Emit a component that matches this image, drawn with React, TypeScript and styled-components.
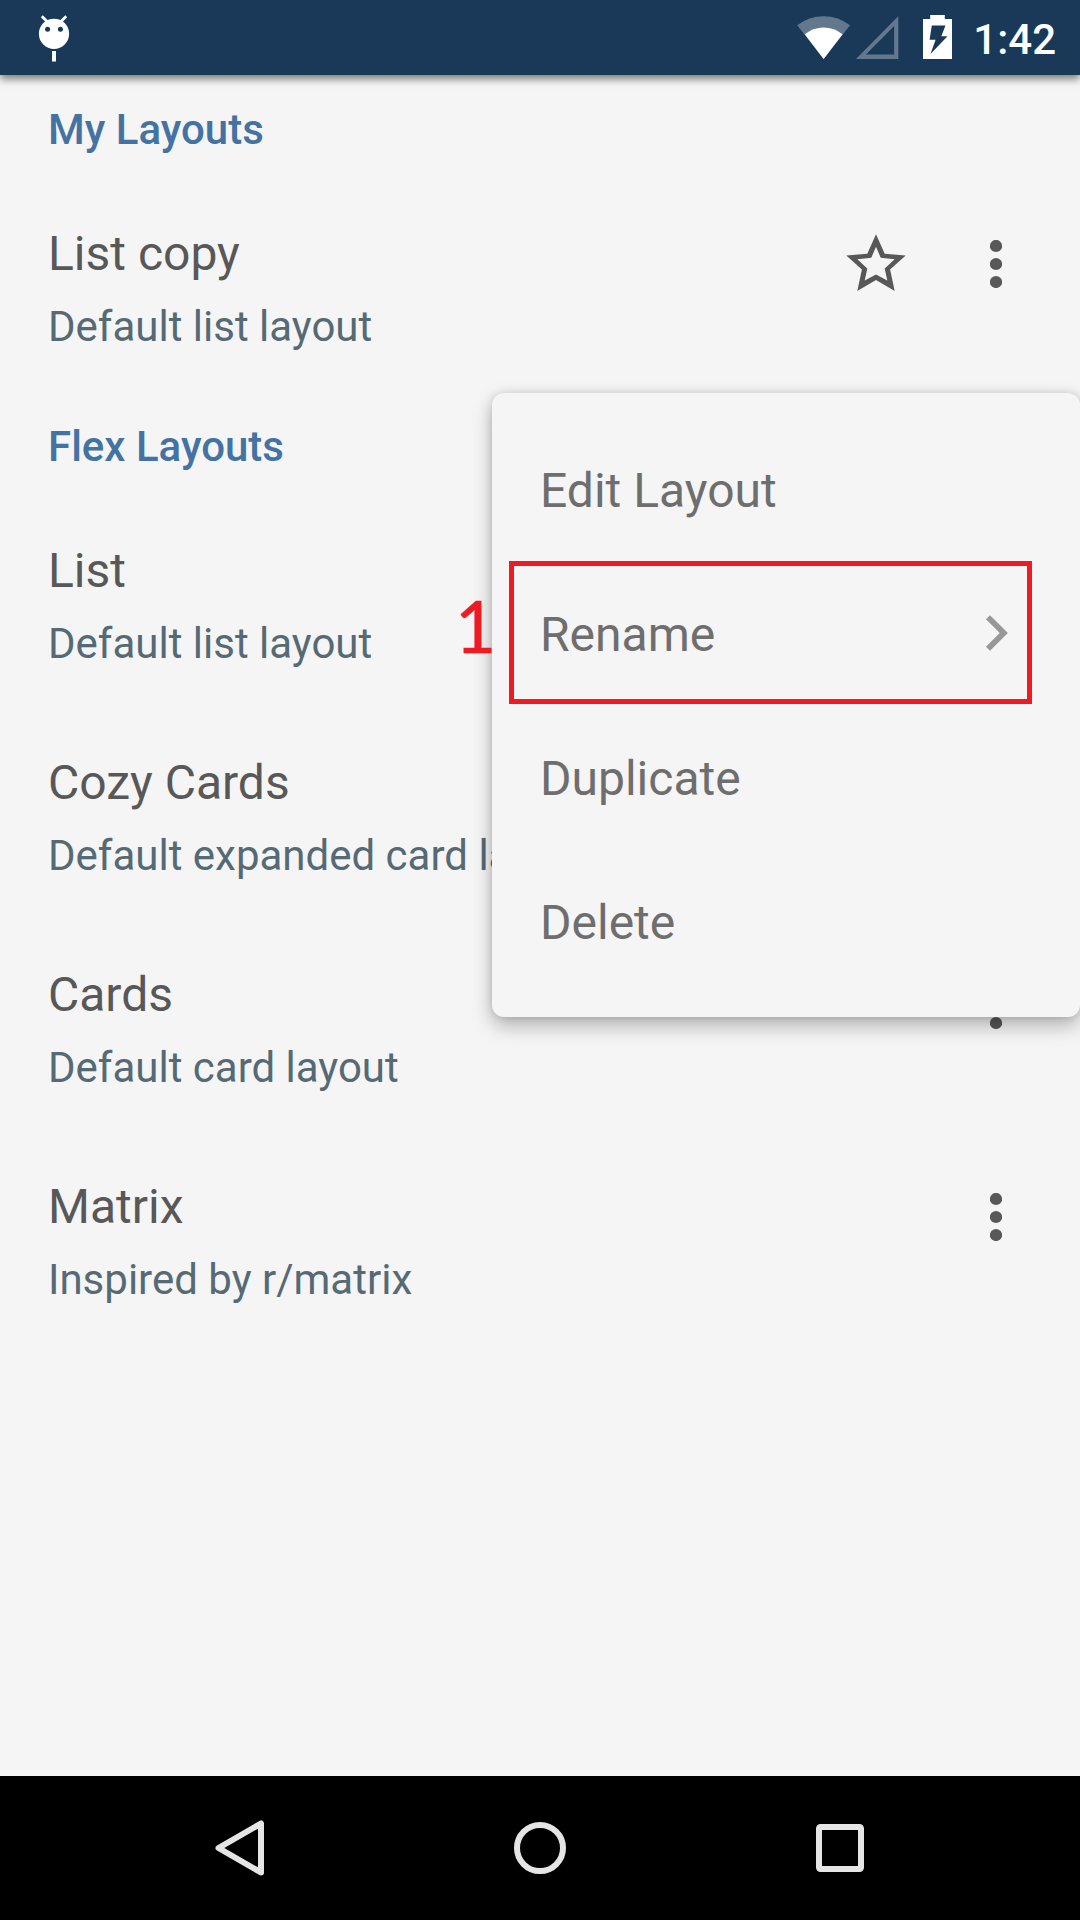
import React from "react";
import styled, { createGlobalStyle } from "styled-components";

const color = {
  bar: "#1a3958",
  surface: "#f5f5f5",
  section: "#4473a3",
  title: "#585858",
  caption: "#566a76",
  menuText: "#6e6e6e",
  chevron: "#989898",
  mark: "#ed1c24",
  nav: "#e5e5e5",
};

const GlobalStyle = createGlobalStyle`
  *, *::before, *::after { box-sizing: border-box; }
  body {
    margin: 0;
    background: ${color.surface};
    font-family: Roboto, "Noto Sans", sans-serif;
  }
`;

const Screen = styled.div`
  position: relative;
  display: flex;
  flex-direction: column;
  width: 1080px;
  height: 1920px;
  overflow: hidden;
  background: ${color.surface};
`;

const StatusBar = styled.header`
  flex: none;
  display: flex;
  align-items: flex-start;
  justify-content: space-between;
  height: 75px;
  padding: 0 24px 0 36px;
  background: ${color.bar};
  box-shadow: 0 4px 8px rgba(0, 0, 0, 0.5);
  color: #fff;
`;

const StatusIcons = styled.div`
  display: flex;
  align-items: flex-start;
  height: 75px;
`;

const Glyph = styled.svg`
  display: block;
  flex: none;
`;

const Clock = styled.time`
  margin-left: 20px;
  font-size: 42px;
  font-weight: 500;
  line-height: 79px;
`;

const Content = styled.main`
  flex: 1;
`;

const SectionTitle = styled.h2`
  height: 105px;
  margin: 0;
  padding: 25px 48px 0;
  color: ${color.section};
  font-size: 42px;
  font-weight: 500;
  line-height: 60px;
`;

const LayoutRow = styled.div`
  display: flex;
  justify-content: space-between;
  height: 212px;
  padding: 0 24px 0 48px;
`;

const RowText = styled.div`
  display: flex;
  flex-direction: column;
  gap: 13px;
  padding-top: 44px;
  white-space: nowrap;
`;

const RowTitle = styled.div`
  color: ${color.title};
  font-size: 48px;
  line-height: 60px;
`;

const RowCaption = styled.div`
  color: ${color.caption};
  font-size: 42px;
  line-height: 60px;
`;

const RowActions = styled.div`
  display: flex;
  height: 168px;
  align-items: center;
`;

const IconButton = styled.button`
  display: flex;
  align-items: center;
  justify-content: center;
  width: 120px;
  height: 120px;
  padding: 0;
  border: 0;
  background: none;
  color: ${color.title};
`;

const PopupMenu = styled.div`
  position: absolute;
  top: 393px;
  right: 0;
  width: 588px;
  height: 624px;
  padding: 24px 0;
  border-radius: 12px;
  background: ${color.surface};
  box-shadow: 0 9px 20px rgba(0, 0, 0, 0.27), 0 0 9px rgba(0, 0, 0, 0.13);
`;

const MenuItem = styled.div`
  display: flex;
  align-items: center;
  justify-content: space-between;
  height: 144px;
  padding: 0 60px 0 48px;
  color: ${color.menuText};
  font-size: 48px;
`;

const MenuLabel = styled.span`
  padding-top: 4px;
  line-height: 60px;
`;

const Highlight = styled.div`
  position: absolute;
  top: 561px;
  left: 509px;
  width: 523px;
  height: 143px;
  border: 5px solid ${color.mark};
`;

const StepNumber = styled.div`
  position: absolute;
  top: 586px;
  left: 455px;
  color: ${color.mark};
  font-family: Lato, sans-serif;
  font-size: 71px;
  line-height: 80px;
  -webkit-text-stroke: 0.5px ${color.mark};
`;

const NavBar = styled.nav`
  flex: none;
  display: flex;
  height: 144px;
  padding: 0 90px;
  background: #000;
`;

const NavButton = styled.button`
  flex: 1;
  display: flex;
  align-items: center;
  justify-content: center;
  padding: 0;
  border: 0;
  background: none;
  color: ${color.nav};
`;

const DebugIcon = () => (
  <Glyph width="36" height="75" viewBox="0 0 36 75" fill="#fff">
    <circle cx="18" cy="33.8" r="15.1" />
    <path d="M5.8 16.3l5 5M30.2 16.3l-5 5" stroke="#fff" strokeWidth="2.8" />
    <circle cx="11.6" cy="29.3" r="2.5" fill={color.bar} />
    <circle cx="24.4" cy="29.3" r="2.5" fill={color.bar} />
    <path d="M16 51h4v10.5h-4z" />
  </Glyph>
);

const WifiIcon = () => (
  <Glyph width="54" height="75" viewBox="0 0 54 75" fill="#fff">
    <path d="M.2 25.3Q12 16.3 26.6 16.3T53 25.3L26.6 59z" opacity=".32" />
    <path d="M7.8 34.3Q16 27.5 26.6 27.5T45.6 34.3L26.6 59z" />
  </Glyph>
);

const SignalIcon = () => (
  <Glyph width="43" height="75" viewBox="0 0 43 75" fill="#fff">
    <path
      d="M0 59L42.3 16.3V59zM9.9 54.5H38.1V26.1z"
      fillRule="evenodd"
      opacity=".32"
    />
  </Glyph>
);

const BatteryIcon = () => (
  <Glyph width="30" height="75" viewBox="0 0 30 75" fill="#fff">
    <path
      fillRule="evenodd"
      d="M7.2 15H21.8V19H29V59H0V19H7.2zM8.8 25.5L6.6 39.7H12.6L7.5 53.9L24.5 36.2H18.3L22.5 25.5z"
    />
  </Glyph>
);

const StarIcon = () => (
  <Glyph width="60" height="60" viewBox="0 0 60 60">
    <path
      fill="currentColor"
      fillRule="evenodd"
      d="M30 .3L38.7 19.8L59.7 21.5L44.1 35.4L48.7 57L30 46.1L11.3 57L15.9 35.4L.3 21.5L21.3 19.8zM30 12.7L25.3 23.8L11.3 25.2L21.3 34.6L18.7 46.6L30 40.5L41.3 46.6L38.7 34.6L48.7 25.2L34.7 23.8z"
    />
  </Glyph>
);

const MoreIcon = () => (
  <Glyph width="12" height="48" viewBox="0 0 12 48" fill="currentColor">
    <circle cx="6" cy="6" r="6.1" />
    <circle cx="6" cy="24" r="6.1" />
    <circle cx="6" cy="42" r="6.1" />
  </Glyph>
);

const ChevronIcon = () => (
  <Glyph width="48" height="48" viewBox="0 0 48 48">
    <path
      d="M16 8.3L31.8 24L16 39.7"
      fill="none"
      stroke={color.chevron}
      strokeWidth="5.8"
    />
  </Glyph>
);

const BackIcon = () => (
  <Glyph width="72" height="72" viewBox="0 0 72 72">
    <path
      d="M57 11.5V60.5L14.5 36z"
      fill="none"
      stroke="currentColor"
      strokeWidth="6"
      strokeLinejoin="round"
    />
  </Glyph>
);

const HomeIcon = () => (
  <Glyph width="72" height="72" viewBox="0 0 72 72">
    <circle cx="36" cy="36" r="23" fill="none" stroke="currentColor" strokeWidth="6" />
  </Glyph>
);

const RecentsIcon = () => (
  <Glyph width="72" height="72" viewBox="0 0 72 72">
    <path
      fill="currentColor"
      fillRule="evenodd"
      d="M16.5 12H55.5A4.5 4.5 0 0 1 60 16.5V55.5A4.5 4.5 0 0 1 55.5 60H16.5A4.5 4.5 0 0 1 12 55.5V16.5A4.5 4.5 0 0 1 16.5 12zM18 18V54H54V18z"
    />
  </Glyph>
);

interface Layout {
  name: string;
  description: string;
  starrable?: boolean;
}

const sections: { title: string; layouts: Layout[] }[] = [
  {
    title: "My Layouts",
    layouts: [
      { name: "List copy", description: "Default list layout", starrable: true },
    ],
  },
  {
    title: "Flex Layouts",
    layouts: [
      { name: "List", description: "Default list layout" },
      { name: "Cozy Cards", description: "Default expanded card layout" },
      { name: "Cards", description: "Default card layout" },
      { name: "Matrix", description: "Inspired by r/matrix" },
    ],
  },
];

const menuItems = [
  { label: "Edit Layout" },
  { label: "Rename", submenu: true },
  { label: "Duplicate" },
  { label: "Delete" },
];

const Spaced = styled.div<{ $left: number }>`
  margin-left: ${({ $left }) => $left}px;
`;

export default function App() {
  return (
    <>
      <GlobalStyle />
      <Screen>
        <StatusBar>
          <DebugIcon />
          <StatusIcons>
            <WifiIcon />
            <Spaced $left={5}>
              <SignalIcon />
            </Spaced>
            <Spaced $left={24}>
              <BatteryIcon />
            </Spaced>
            <Clock>1:42</Clock>
          </StatusIcons>
        </StatusBar>
        <Content>
          {sections.map((section) => (
            <section key={section.title}>
              <SectionTitle>{section.title}</SectionTitle>
              {section.layouts.map((layout) => (
                <LayoutRow key={layout.name}>
                  <RowText>
                    <RowTitle>{layout.name}</RowTitle>
                    <RowCaption>{layout.description}</RowCaption>
                  </RowText>
                  <RowActions>
                    {layout.starrable && (
                      <IconButton aria-label="Favorite">
                        <StarIcon />
                      </IconButton>
                    )}
                    <IconButton aria-label="More">
                      <MoreIcon />
                    </IconButton>
                  </RowActions>
                </LayoutRow>
              ))}
            </section>
          ))}
        </Content>
        <NavBar>
          <NavButton aria-label="Back">
            <BackIcon />
          </NavButton>
          <NavButton aria-label="Home">
            <HomeIcon />
          </NavButton>
          <NavButton aria-label="Recents">
            <RecentsIcon />
          </NavButton>
        </NavBar>
        <PopupMenu>
          {menuItems.map((item) => (
            <MenuItem key={item.label}>
              <MenuLabel>{item.label}</MenuLabel>
              {item.submenu && <ChevronIcon />}
            </MenuItem>
          ))}
        </PopupMenu>
        <Highlight />
        <StepNumber>1</StepNumber>
      </Screen>
    </>
  );
}
